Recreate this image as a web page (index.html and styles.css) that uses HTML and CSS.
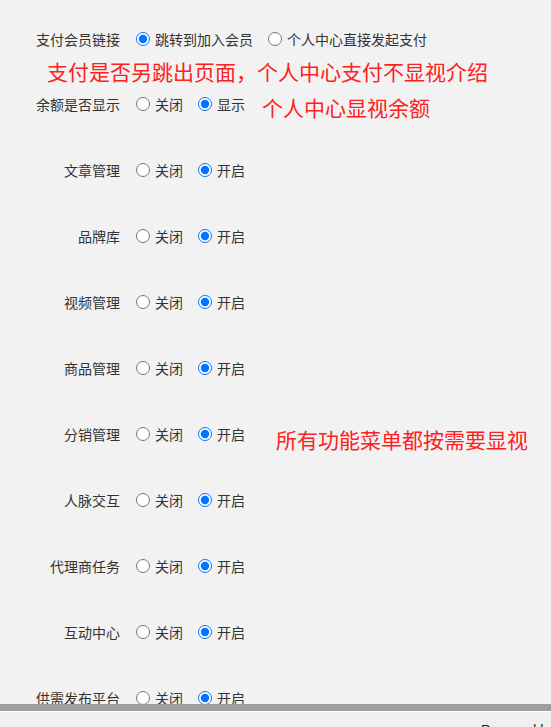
FILE: index.html
```html
<!DOCTYPE html>
<html lang="zh-CN">
<head>
    <meta charset="UTF-8">
    <meta name="viewport" content="width=device-width, initial-scale=1.0">
    <title>功能设置</title>
    <link rel="stylesheet" href="styles.css">
</head>
<body>
    <div class="content">
        <div class="form-item">
            <span class="item-label">支付会员链接</span>
            <div class="opts">
                <label class="opt"><input type="radio" name="paylink" checked><span>跳转到加入会员</span></label>
                <label class="opt"><input type="radio" name="paylink"><span>个人中心直接发起支付</span></label>
            </div>
        </div>
        <div class="note note-line">支付是否另跳出页面，个人中心支付不显视介绍</div>

        <div class="form-item">
            <span class="item-label">余额是否显示</span>
            <div class="opts">
                <label class="opt"><input type="radio" name="balance"><span>关闭</span></label>
                <label class="opt"><input type="radio" name="balance" checked><span>显示</span></label>
            </div>
            <span class="note note-balance">个人中心显视余额</span>
        </div>

        <div class="form-item gap-top">
            <span class="item-label">文章管理</span>
            <div class="opts">
                <label class="opt"><input type="radio" name="article"><span>关闭</span></label>
                <label class="opt"><input type="radio" name="article" checked><span>开启</span></label>
            </div>
        </div>
        <div class="form-item gap-top">
            <span class="item-label">品牌库</span>
            <div class="opts">
                <label class="opt"><input type="radio" name="brand"><span>关闭</span></label>
                <label class="opt"><input type="radio" name="brand" checked><span>开启</span></label>
            </div>
        </div>
        <div class="form-item gap-top">
            <span class="item-label">视频管理</span>
            <div class="opts">
                <label class="opt"><input type="radio" name="video"><span>关闭</span></label>
                <label class="opt"><input type="radio" name="video" checked><span>开启</span></label>
            </div>
        </div>
        <div class="form-item gap-top">
            <span class="item-label">商品管理</span>
            <div class="opts">
                <label class="opt"><input type="radio" name="goods"><span>关闭</span></label>
                <label class="opt"><input type="radio" name="goods" checked><span>开启</span></label>
            </div>
        </div>
        <div class="form-item gap-top">
            <span class="item-label">分销管理</span>
            <div class="opts">
                <label class="opt"><input type="radio" name="dist"><span>关闭</span></label>
                <label class="opt"><input type="radio" name="dist" checked><span>开启</span></label>
            </div>
            <span class="note note-menu">所有功能菜单都按需要显视</span>
        </div>
        <div class="form-item gap-top">
            <span class="item-label">人脉交互</span>
            <div class="opts">
                <label class="opt"><input type="radio" name="contacts"><span>关闭</span></label>
                <label class="opt"><input type="radio" name="contacts" checked><span>开启</span></label>
            </div>
        </div>
        <div class="form-item gap-top">
            <span class="item-label">代理商任务</span>
            <div class="opts">
                <label class="opt"><input type="radio" name="agent"><span>关闭</span></label>
                <label class="opt"><input type="radio" name="agent" checked><span>开启</span></label>
            </div>
        </div>
        <div class="form-item gap-top">
            <span class="item-label">互动中心</span>
            <div class="opts">
                <label class="opt"><input type="radio" name="interact"><span>关闭</span></label>
                <label class="opt"><input type="radio" name="interact" checked><span>开启</span></label>
            </div>
        </div>
        <div class="form-item gap-top">
            <span class="item-label">供需发布平台</span>
            <div class="opts">
                <label class="opt"><input type="radio" name="supply"><span>关闭</span></label>
                <label class="opt"><input type="radio" name="supply" checked><span>开启</span></label>
            </div>
        </div>
    </div>

    <div class="footer">
        <div class="footer-text">Powered by</div>
    </div>
</body>
</html>
```

FILE: styles.css
```css
body {
    margin: 0;
    background-color: #f2f2f2;
    font-family: "Noto Sans CJK SC", "Noto Sans", sans-serif;
    font-size: 14px;
    color: #333;
    overflow: hidden;
}

.content {
    height: 704px;
    padding-top: 27px;
    box-sizing: border-box;
    overflow: hidden;
}

.form-item {
    display: flex;
    align-items: center;
    height: 24px;
    line-height: 24px;
    white-space: nowrap;
}

.gap-top {
    margin-top: 42px; /* 66px entre linhas */
}

.item-label {
    width: 120px;
    text-align: right;
    flex-shrink: 0;
}

.opts {
    display: flex;
    align-items: center;
    gap: 15px;
    margin-left: 16px;
}

.opt {
    display: flex;
    align-items: center;
    gap: 5px;
}

.opt input {
    margin: 0;
    width: 14px;
    height: 14px;
}

.note {
    color: #ff2020;
    font-size: 21px;
    line-height: 28px;
    white-space: nowrap;
}

.note-line {
    height: 41px;
    line-height: 41px;
    padding-left: 47px;
}

.note-balance {
    margin-left: 17px;
    margin-top: 5px;
}

.note-menu {
    margin-left: 31px;
    margin-top: 9px;
}

.footer {
    height: 23px;
    background: #9e9e9e;
    padding-top: 7px;
}

.footer-text {
    height: 16px;
    border-top: 1px solid #fff;
    background: #f0f0f0;
    padding-left: 481px;
    padding-top: 10px;
    font-family: "Liberation Sans", Arial, sans-serif;
    font-size: 14px;
    line-height: 16px;
    color: #222;
    white-space: nowrap;
}
```
